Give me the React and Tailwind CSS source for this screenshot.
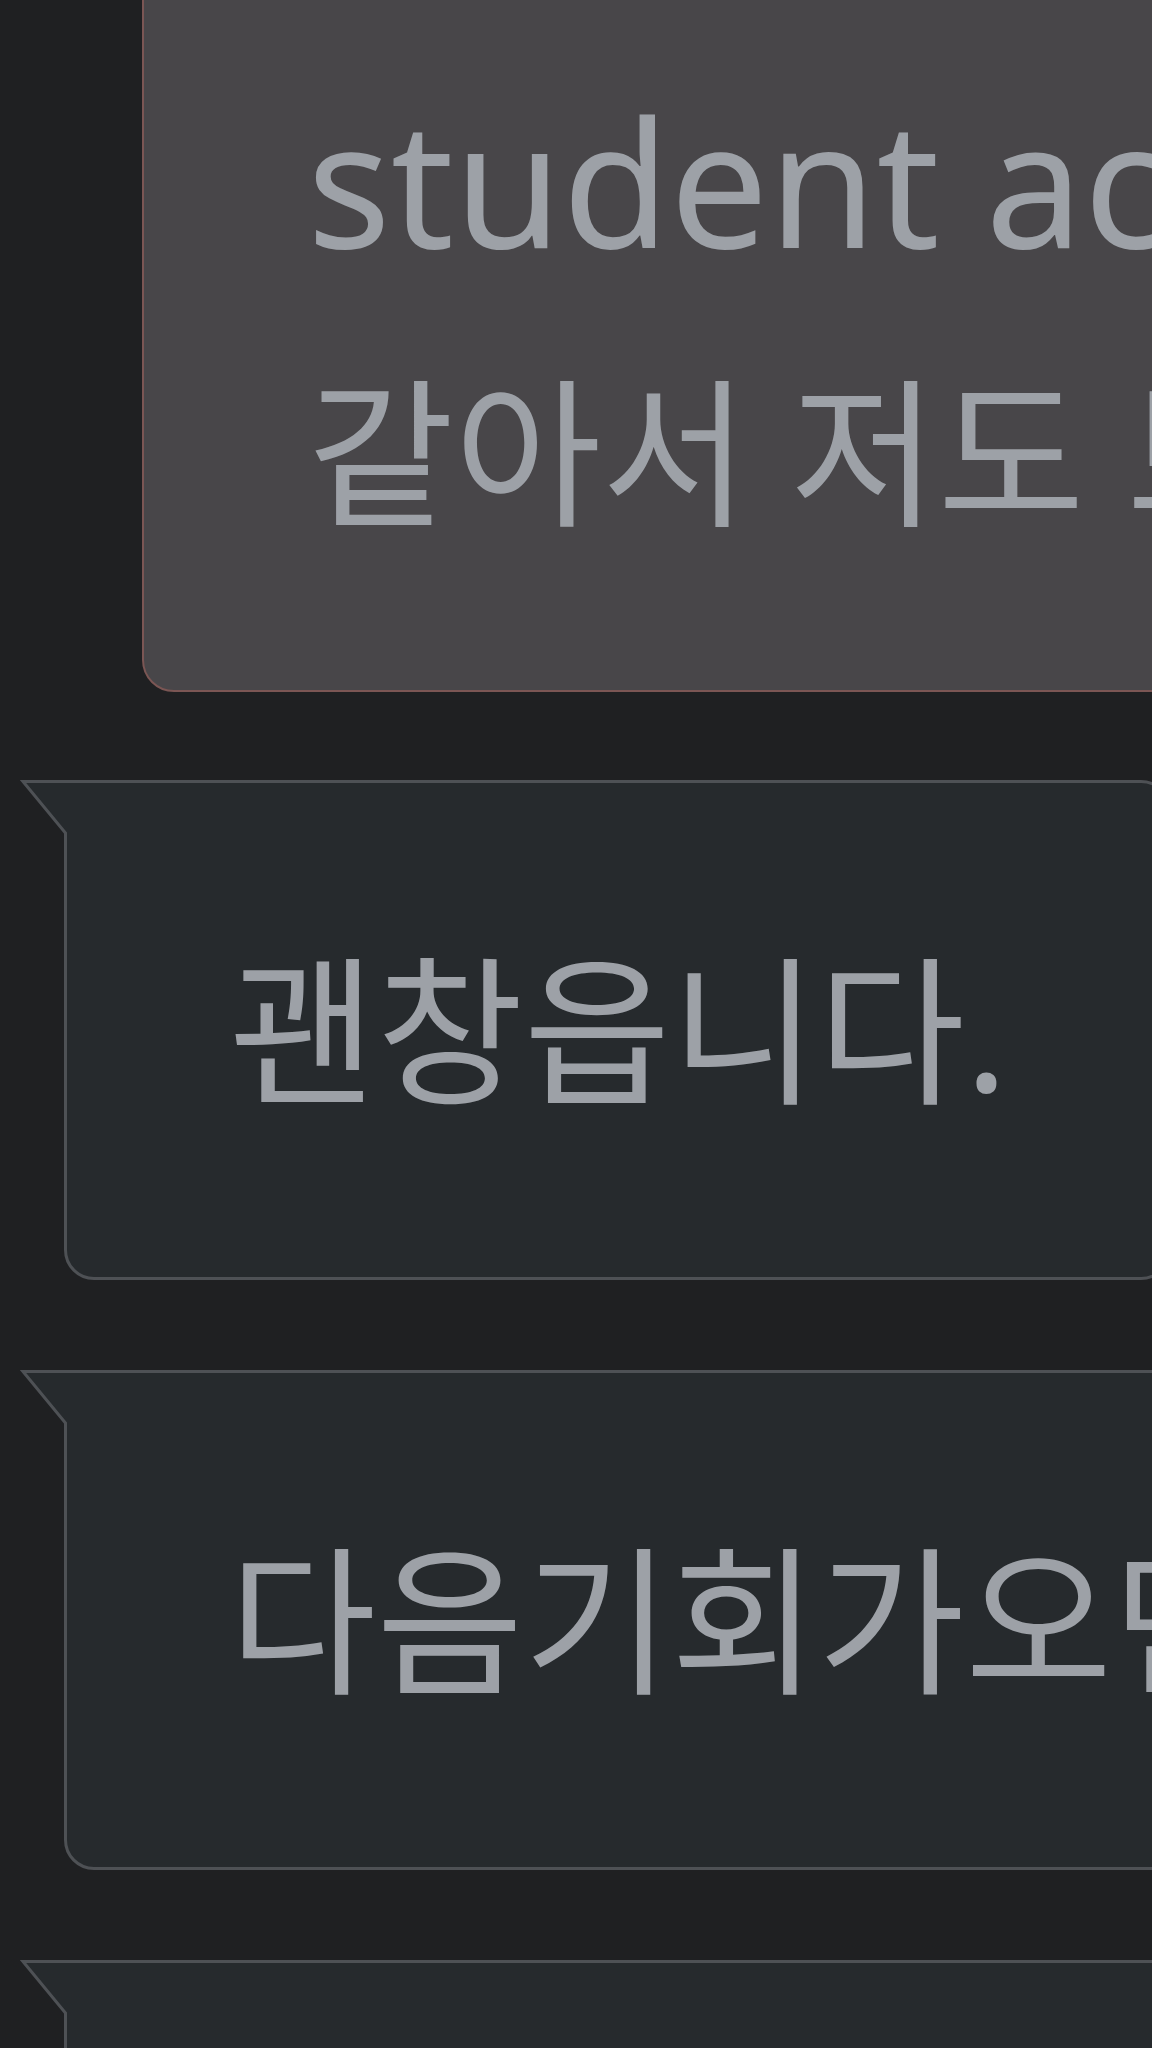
import React from 'react';

const font = { fontFamily: '"Noto Sans", "Noto Sans CJK KR", sans-serif' };

function Tail() {
  return (
    <svg
      className="absolute left-[-47px] top-[-3px]"
      width="52"
      height="60"
      viewBox="0 0 52 60"
    >
      <polygon points="3,1.5 52,1.5 52,53 45.5,53" fill="#262a2d" />
      <polyline
        points="52,1.5 3,1.5 45.5,53 45.5,60"
        fill="none"
        stroke="#4e5155"
        strokeWidth="3"
        strokeLinejoin="miter"
      />
    </svg>
  );
}

function Bubble({ children }) {
  return (
    <div className="relative ml-[64px] w-fit rounded-[30px] rounded-tl-none border-[3px] border-[#4e5155] bg-[#262a2d] pl-[162px] pr-[160px] pt-[111px] pb-[111px]">
      <Tail />
      <div className="whitespace-nowrap text-[160px] leading-[272px] text-[#9da1a7]">
        {children}
      </div>
    </div>
  );
}

export default function App() {
  return (
    <div style={font} className="h-[2048px] w-[1152px] overflow-hidden bg-[#1f2022]">
      <div className="flex flex-col">
        <div className="ml-[142px] mt-[-69px] w-[1400px] rounded-[32px] border-2 border-[#7b5654] bg-[#484649] pl-[163px] pt-[111px] pb-[102px] text-[#9da1a7]">
          <div className="whitespace-nowrap text-[175px] leading-[272px]">student activity가 정말</div>
          <div className="whitespace-nowrap text-[160px] leading-[272px]">같아서 저도 보고 싶어요.</div>
        </div>
        <div className="mt-[88px]">
          <Bubble>괜창읍니다.</Bubble>
        </div>
        <div className="mt-[90px]">
          <Bubble>다음기회가오면 꼭 참여하겠습니다.</Bubble>
        </div>
        <div className="mt-[90px]">
          <Bubble>감사합니다. 좋은 하루 되세요.</Bubble>
        </div>
      </div>
    </div>
  );
}
